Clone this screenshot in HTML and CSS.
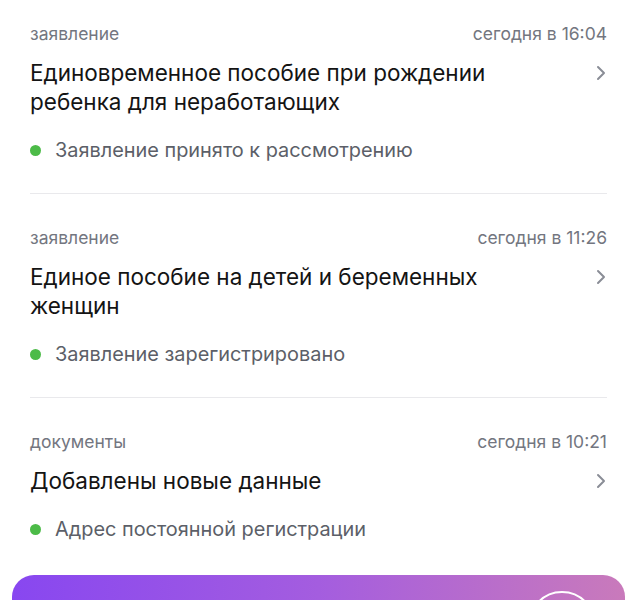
FILE: index.html
```html
<!DOCTYPE html>
<html lang="ru">
<head>
    <meta charset="UTF-8">
    <meta name="viewport" content="width=device-width, initial-scale=1.0">
    <title>Уведомления</title>
    <link rel="stylesheet" href="styles.css">
</head>
<body>

<div class="feed">
    <div class="item">
        <div class="meta">
            <span>заявление</span>
            <span>сегодня в 16:04</span>
        </div>
        <div class="head">
            <div class="title">Единовременное пособие при рождении ребенка для неработающих</div>
            <svg class="chevron" width="10" height="16" viewBox="0 0 10 16"><path d="M2 2l6 6-6 6" fill="none" stroke="#8a8d96" stroke-width="2" stroke-linecap="round" stroke-linejoin="round"/></svg>
        </div>
        <div class="status"><span class="dot"></span>Заявление принято к рассмотрению</div>
    </div>

    <div class="item">
        <div class="meta">
            <span>заявление</span>
            <span>сегодня в 11:26</span>
        </div>
        <div class="head">
            <div class="title">Единое пособие на детей и беременных женщин</div>
            <svg class="chevron" width="10" height="16" viewBox="0 0 10 16"><path d="M2 2l6 6-6 6" fill="none" stroke="#8a8d96" stroke-width="2" stroke-linecap="round" stroke-linejoin="round"/></svg>
        </div>
        <div class="status"><span class="dot"></span>Заявление зарегистрировано</div>
    </div>

    <div class="item last">
        <div class="meta">
            <span>документы</span>
            <span>сегодня в 10:21</span>
        </div>
        <div class="head">
            <div class="title">Добавлены новые данные</div>
            <svg class="chevron" width="10" height="16" viewBox="0 0 10 16"><path d="M2 2l6 6-6 6" fill="none" stroke="#8a8d96" stroke-width="2" stroke-linecap="round" stroke-linejoin="round"/></svg>
        </div>
        <div class="status"><span class="dot"></span>Адрес постоянной регистрации</div>
    </div>
</div>

<div class="promo">
    <div class="ring"></div>
</div>

</body>
</html>
```

FILE: styles.css
```css
body {
    font-family: Inter, Roboto, sans-serif;
    background-color: #ffffff;
    margin: 0;
    padding: 0;
}

.feed {
    padding: 0 30px;
}

.item {
    padding: 34px 0 31px;
    border-bottom: 1px solid #e9e9ec;
}

.item:first-child {
    padding-top: 24px;
}

.item.last {
    border-bottom: none;
    padding-bottom: 34px;
}

.meta {
    display: flex;
    justify-content: space-between;
    font-size: 17.5px;
    line-height: 20px;
    color: #737680;
}

.head {
    display: flex;
    justify-content: space-between;
    align-items: flex-start;
    margin-top: 14px;
}

.title {
    font-size: 22.5px;
    line-height: 29px;
    color: #141414;
    max-width: 500px;
}

.chevron {
    margin-top: 7px;
    margin-right: 1px;
    flex-shrink: 0;
}

.status {
    display: flex;
    align-items: center;
    margin-top: 22px;
    font-size: 19.9px;
    line-height: 24px;
    color: #5c5f68;
}

.dot {
    width: 11px;
    height: 11px;
    border-radius: 50%;
    background-color: #4cbb48;
    margin: 0 14px 0 0;
}

.promo {
    position: relative;
    margin: 0 12px;
    height: 80px;
    border-radius: 22px;
    background: linear-gradient(90deg, #8847f0 0%, #a45ddf 50%, #c97abb 100%);
    overflow: hidden;
}

.ring {
    position: absolute;
    left: 516px;
    top: 16px;
    width: 64px;
    height: 64px;
    border: 2px solid #ffffff;
    border-radius: 50%;
}
```
